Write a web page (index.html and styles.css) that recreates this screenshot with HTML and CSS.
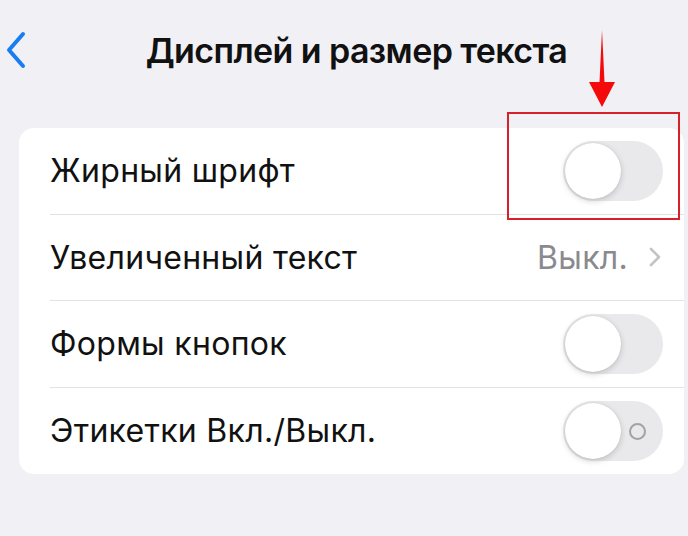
FILE: index.html
```html
<!DOCTYPE html>
<html lang="ru">
<head>
    <meta charset="UTF-8">
    <meta name="viewport" content="width=device-width, initial-scale=1.0">
    <title>Дисплей и размер текста</title>
    <link rel="stylesheet" href="styles.css">
</head>
<body>
    <div class="nav-bar">
        <a href="javascript:history.back()" class="back-link">
            <svg width="22" height="38" viewBox="0 0 22 38">
                <path d="M18 3 L4 19 L18 35" fill="none" stroke="#1a7cf2" stroke-width="4" stroke-linecap="round" stroke-linejoin="round"/>
            </svg>
        </a>
        <h1 class="nav-title">Дисплей и размер текста</h1>
    </div>

    <div class="settings-card">
        <div class="setting-row">
            <div class="row-inner">
                <span class="row-label">Жирный шрифт</span>
                <div class="switch"><div class="knob"></div></div>
            </div>
        </div>
        <div class="setting-row">
            <div class="row-inner link-row">
                <span class="row-label">Увеличенный текст</span>
                <span class="row-value">Выкл.
                    <svg class="chevron" width="14" height="20" viewBox="0 0 14 20">
                        <path d="M3 2 L11 10 L3 18" fill="none" stroke="#c4c4c7" stroke-width="2.6" stroke-linecap="round" stroke-linejoin="round"/>
                    </svg>
                </span>
            </div>
        </div>
        <div class="setting-row">
            <div class="row-inner">
                <span class="row-label">Формы кнопок</span>
                <div class="switch"><div class="knob"></div></div>
            </div>
        </div>
        <div class="setting-row last">
            <div class="row-inner">
                <span class="row-label">Этикетки Вкл./Выкл.</span>
                <div class="switch"><div class="knob"></div><span class="off-mark"></span></div>
            </div>
        </div>
    </div>

    <!-- пометка поверх скриншота -->
    <svg class="mark-arrow" width="30" height="82" viewBox="0 0 30 82">
        <polygon points="14,2 11.5,54 1,54 14,79 27,54 16.5,54" fill="#f40a0a"/>
    </svg>
    <div class="mark-box"></div>
</body>
</html>
```

FILE: styles.css
```css
body {
    font-family: Inter, Roboto, "Noto Sans", "Liberation Sans", sans-serif;
    margin: 0;
    padding: 0;
    background-color: #f0f0f5;
    color: #111;
    position: relative;
    height: 536px;
    overflow: hidden;
}
.nav-bar {
    height: 100px;
    display: flex;
    align-items: center;
    justify-content: center;
    position: relative;
}
.back-link {
    position: absolute;
    left: 5px;
    top: 31px;
    display: flex;
}
.nav-title {
    margin: 0;
    font-size: 34px;
    font-weight: 600;
    letter-spacing: -0.6px;
    color: #111;
    padding-left: 25px;
}
.settings-card {
    margin: 28px 4px 0 19px;
    background: #fff;
    border-radius: 15px;
}
.setting-row {
    padding-left: 31px;
    height: 86.5px;
}
.row-inner {
    height: 100%;
    box-sizing: border-box;
    display: flex;
    align-items: center;
    justify-content: space-between;
    padding-right: 21px;
    border-bottom: 1.5px solid #e2e2e4;
}
.setting-row.last .row-inner {
    border-bottom: none;
}
.row-label {
    font-size: 32px;
    letter-spacing: 0.3px;
}
.link-row {
    padding-right: 22px;
}
.row-value {
    font-size: 32px;
    letter-spacing: 0.3px;
    color: #8a8a8e;
    display: flex;
    align-items: center;
    gap: 20px;
}
.switch {
    width: 100px;
    height: 60px;
    border-radius: 30px;
    background: #e9e9eb;
    position: relative;
}
.knob {
    position: absolute;
    left: 2px;
    top: 2px;
    width: 56px;
    height: 56px;
    border-radius: 50%;
    background: #fff;
    box-shadow: 0 2px 6px rgba(0, 0, 0, 0.18), 0 0 1px rgba(0, 0, 0, 0.15);
}
.off-mark {
    position: absolute;
    left: 66px;
    top: 22px;
    width: 13px;
    height: 13px;
    border: 2px solid #a2a2a6;
    border-radius: 50%;
}
.mark-arrow {
    position: absolute;
    left: 588px;
    top: 28px;
}
.mark-box {
    position: absolute;
    left: 507px;
    top: 112px;
    width: 169px;
    height: 104px;
    border: 2px solid #d4212a;
}
```
